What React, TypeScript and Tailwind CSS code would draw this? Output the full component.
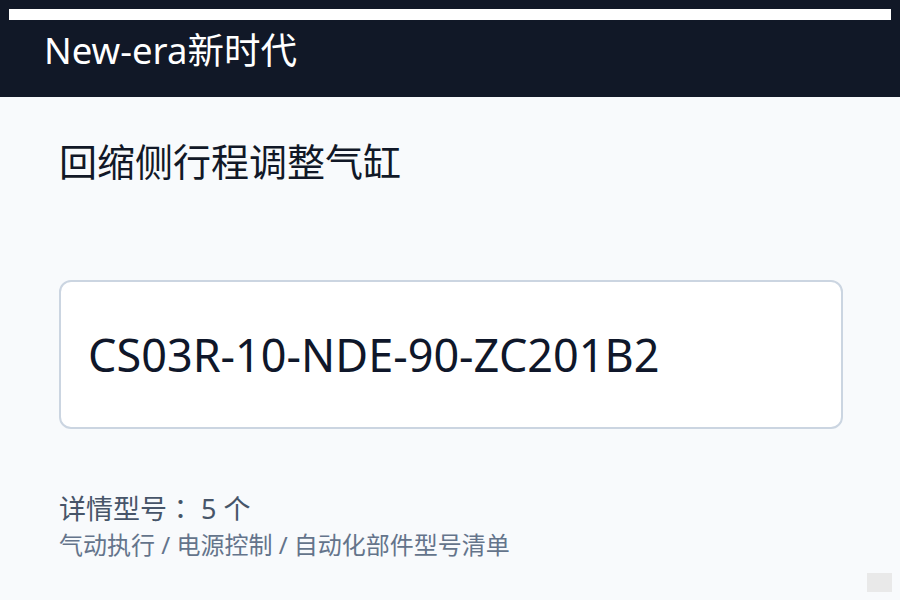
export default function App() {
  return (
    <div className="relative min-h-screen bg-[#f8fafc] font-['Noto_Sans','Noto_Sans_CJK_SC',sans-serif]">
      <header className="h-[97px] bg-[#111827] px-[9px] pt-[9px]">
        <div className="h-[11px] bg-white" />
        <h1 className="mt-[12px] pl-[35px] text-[36.5px] leading-none text-white">
          New-era新时代
        </h1>
      </header>

      <main className="pl-[59px] pr-[57px]">
        <h2 className="mt-[45px] text-[38px] leading-none text-[#111827]">
          回缩侧行程调整气缸
        </h2>

        <div className="mt-[100px] flex h-[149px] items-center rounded-[12px] border-2 border-[#cbd5e1] bg-white pl-[27px]">
          <span className="text-[45px] leading-none text-[#0f172a]">
            CS03R-10-NDE-90-ZC201B2
          </span>
        </div>

        <p className="mt-[65px] text-[27px] leading-none text-[#475569]">
          详情型号<span className="font-['Noto_Sans_CJK_JP',sans-serif]">：</span> 5 个
        </p>
        <p className="mt-[11px] text-[24px] leading-none text-[#64748b]">
          气动执行 / 电源控制 / 自动化部件型号清单
        </p>
      </main>

      <div className="absolute bottom-[8px] right-[8px] h-[19px] w-[25px] bg-[#e9e9e9]" />
    </div>
  )
}
